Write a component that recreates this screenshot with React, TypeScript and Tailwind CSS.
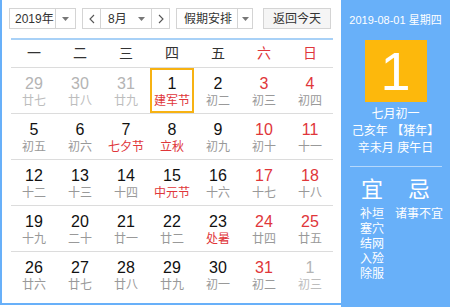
import React from "react";

type Cell = { d: number; l: string; numRed?: boolean; lunarRed?: boolean; dim?: boolean; today?: boolean };

const rows: Cell[][] = [
  [
    { d: 29, l: "廿七", dim: true },
    { d: 30, l: "廿八", dim: true },
    { d: 31, l: "廿九", dim: true },
    { d: 1, l: "建军节", lunarRed: true, today: true },
    { d: 2, l: "初二" },
    { d: 3, l: "初三", numRed: true },
    { d: 4, l: "初四", numRed: true },
  ],
  [
    { d: 5, l: "初五" },
    { d: 6, l: "初六" },
    { d: 7, l: "七夕节", lunarRed: true },
    { d: 8, l: "立秋", lunarRed: true },
    { d: 9, l: "初九" },
    { d: 10, l: "初十", numRed: true },
    { d: 11, l: "十一", numRed: true },
  ],
  [
    { d: 12, l: "十二" },
    { d: 13, l: "十三" },
    { d: 14, l: "十四" },
    { d: 15, l: "中元节", lunarRed: true },
    { d: 16, l: "十六" },
    { d: 17, l: "十七", numRed: true },
    { d: 18, l: "十八", numRed: true },
  ],
  [
    { d: 19, l: "十九" },
    { d: 20, l: "二十" },
    { d: 21, l: "廿一" },
    { d: 22, l: "廿二" },
    { d: 23, l: "处暑", lunarRed: true },
    { d: 24, l: "廿四", numRed: true },
    { d: 25, l: "廿五", numRed: true },
  ],
  [
    { d: 26, l: "廿六" },
    { d: 27, l: "廿七" },
    { d: 28, l: "廿八" },
    { d: 29, l: "廿九" },
    { d: 30, l: "初一" },
    { d: 31, l: "初二", numRed: true },
    { d: 1, l: "初三", dim: true },
  ],
];

const weekdays = ["一", "二", "三", "四", "五", "六", "日"];

function Caret() {
  return (
    <svg width="7" height="4" viewBox="0 0 7 4">
      <path d="M0 0 L7 0 L3.5 4 Z" fill="#777" />
    </svg>
  );
}

function Chevron({ dir }: { dir: "l" | "r" }) {
  return (
    <svg width="6" height="10" viewBox="0 0 6 10">
      <path
        d={dir === "l" ? "M5 1 L1 5 L5 9" : "M1 1 L5 5 L1 9"}
        fill="none"
        stroke="#555"
        strokeWidth="1.1"
      />
    </svg>
  );
}

export default function App() {
  return (
    <div
      className="flex w-[450px] h-[307px] bg-white text-[#333] overflow-hidden"
      style={{ fontFamily: '"Liberation Sans", "Noto Sans CJK SC", sans-serif' }}
    >
      {/* Left calendar */}
      <div className="w-[341px] h-[305px] border-l-2 border-b-2 border-[#68b0f9] pl-[7px] flex flex-col">
        {/* toolbar */}
        <div className="flex items-center h-[21px] mt-[8px] text-[12px] text-[#333] whitespace-nowrap">
          <div className="flex h-[21px] w-[67px] border border-[#d4d4d4] bg-white">
            <div className="w-[46px] flex items-center pl-[5px] border-r border-[#d4d4d4]">2019年</div>
            <div className="flex-1 flex items-center justify-center">
              <Caret />
            </div>
          </div>
          <div className="flex h-[21px] w-[88px] ml-[6px] border border-[#d4d4d4] bg-white">
            <div className="w-[18px] flex items-center justify-center border-r border-[#d4d4d4]">
              <Chevron dir="l" />
            </div>
            <div className="w-[51px] flex items-center pl-[7px] pr-[6px] justify-between border-r border-[#d4d4d4]">
              <span>8月</span>
              <Caret />
            </div>
            <div className="flex-1 flex items-center justify-center">
              <Chevron dir="r" />
            </div>
          </div>
          <div className="flex h-[21px] w-[77px] ml-[6px] border border-[#d4d4d4] bg-white">
            <div className="w-[61px] flex items-center pl-[7px] border-r border-[#d4d4d4]">假期安排</div>
            <div className="flex-1 flex items-center justify-center">
              <Caret />
            </div>
          </div>
          <div className="flex h-[21px] w-[68px] ml-[10px] border border-[#d4d4d4] bg-[#f5f5f5] items-center justify-center">
            返回今天
          </div>
        </div>
        {/* blue line */}
        <div className="mt-[9px] ml-[2px] w-[322px] h-[2px] bg-[#a8d1f7]" />
        {/* weekday header */}
        <div className="ml-[2px] w-[322px] grid grid-cols-7 h-[28px] border-b border-[#dcdcdc] text-[14px]">
          {weekdays.map((w, i) => (
            <div
              key={w}
              className={`flex items-center justify-center ${i >= 5 ? "text-[#e0363a]" : "text-[#333]"}`}
            >
              {w}
            </div>
          ))}
        </div>
        {/* rows */}
        <div className="ml-[2px] w-[322px] flex flex-col">
          {rows.map((r, ri) => (
            <div
              key={ri}
              className={`grid grid-cols-7 h-[46px] ${ri < 4 ? "border-b border-[#dcdcdc]" : ""}`}
            >
              {r.map((c, ci) => (
                <div key={ci} className="flex justify-center">
                  <div
                    className={`flex flex-col items-center ${
                      c.today ? "w-[44px] h-[45px] border-2 border-[#f7b213] pt-[5px]" : "w-[44px] pt-[7px]"
                    }`}
                  >
                    <div
                      className={`text-[16px] leading-[18px] ${
                        c.dim ? "text-[#b4b4b4]" : c.numRed ? "text-[#e0363a]" : "text-[#111]"
                      }`}
                    >
                      {c.d}
                    </div>
                    <div
                      className={`text-[12px] leading-[14px] mt-[1px] ${
                        c.lunarRed ? "text-[#e0363a]" : c.dim ? "text-[#bdbdbd]" : "text-[#999]"
                      }`}
                    >
                      {c.l}
                    </div>
                  </div>
                </div>
              ))}
            </div>
          ))}
        </div>
      </div>
      {/* Right panel */}
      <div className="flex-1 h-[307px] bg-[#68b0f9] flex flex-col items-center text-white">
        <div className="mt-[13px] text-[11px] leading-[14px]">2019-08-01 星期四</div>
        <div className="mt-[13px] w-[62px] h-[62px] bg-[#fdb80c] flex items-center justify-center text-[54px] leading-none">
          1
        </div>
        <div className="mt-[4px] text-[12px] leading-[17px] text-center">
          <div>七月初一</div>
          <div>己亥年 【猪年】</div>
          <div>辛未月 庚午日</div>
        </div>
        <div className="mt-[9px] w-[92px] h-px bg-[#b5d8fc]" />
        <div className="w-full flex mt-[10px] pl-[19px]">
          <div className="flex flex-col">
            <div className="text-[22px] leading-[26px] pl-[1px]">宜</div>
            <div className="text-[12px] leading-[15px] mt-[4px]">
              <div>补垣</div>
              <div>塞穴</div>
              <div>结网</div>
              <div>入殓</div>
              <div>除服</div>
            </div>
          </div>
          <div className="flex flex-col items-center ml-[11px]">
            <div className="text-[22px] leading-[26px]">忌</div>
            <div className="text-[12px] leading-[15px] mt-[4px]">诸事不宜</div>
          </div>
        </div>
      </div>
    </div>
  );
}
